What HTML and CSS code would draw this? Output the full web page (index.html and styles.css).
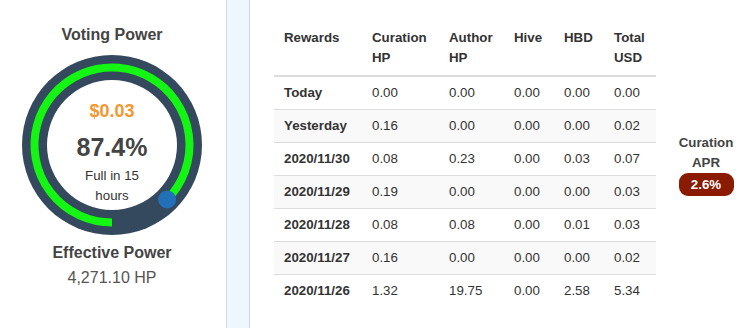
FILE: index.html
```html
<!DOCTYPE html>
<html>
<head>
<meta charset="utf-8">
<link rel="stylesheet" href="styles.css">
</head>
<body>
<div class="page">
  <section class="vp">
    <h2 class="vp-title">Voting Power</h2>
    <div class="gauge">
      <svg class="gauge-svg" width="180" height="180" viewBox="0 0 180 180">
        <circle cx="90" cy="90" r="90" fill="#34495e"/>
        <path d="M90 167.5 A77.5 77.5 0 1 1 145.14 144.46" fill="none" stroke="#14f514" stroke-width="8"/>
        <circle cx="90" cy="90" r="65" fill="#fff"/>
        <circle cx="145.14" cy="144.46" r="9" fill="#2170b8"/>
      </svg>
      <div class="gauge-text">
        <div class="gauge-usd">$0.03</div>
        <div class="gauge-pct">87.4%</div>
        <div class="gauge-full">Full in 15 hours</div>
      </div>
    </div>
    <h3 class="ep-title">Effective Power</h3>
    <div class="ep-value">4,271.10 HP</div>
  </section>
  <div class="band"></div>
  <section class="rewards">
    <table class="rtable">
      <colgroup>
        <col class="c1"><col class="c2"><col class="c3"><col class="c4"><col class="c5"><col class="c6">
      </colgroup>
      <thead>
        <tr><th>Rewards</th><th>Curation HP</th><th>Author HP</th><th>Hive</th><th>HBD</th><th>Total USD</th></tr>
      </thead>
      <tbody>
        <tr><th>Today</th><td>0.00</td><td>0.00</td><td>0.00</td><td>0.00</td><td>0.00</td></tr>
        <tr class="alt"><th>Yesterday</th><td>0.16</td><td>0.00</td><td>0.00</td><td>0.00</td><td>0.02</td></tr>
        <tr><th>2020/11/30</th><td>0.08</td><td>0.23</td><td>0.00</td><td>0.03</td><td>0.07</td></tr>
        <tr class="alt"><th>2020/11/29</th><td>0.19</td><td>0.00</td><td>0.00</td><td>0.00</td><td>0.03</td></tr>
        <tr><th>2020/11/28</th><td>0.08</td><td>0.08</td><td>0.00</td><td>0.01</td><td>0.03</td></tr>
        <tr class="alt"><th>2020/11/27</th><td>0.16</td><td>0.00</td><td>0.00</td><td>0.00</td><td>0.02</td></tr>
        <tr><th>2020/11/26</th><td>1.32</td><td>19.75</td><td>0.00</td><td>2.58</td><td>5.34</td></tr>
      </tbody>
    </table>
    <div class="apr">
      <div class="apr-label">Curation<br>APR</div>
      <span class="apr-badge">2.6%</span>
    </div>
  </section>
</div>
</body>
</html>
```

FILE: styles.css
```css
html, body {
  margin: 0;
  padding: 0;
  background: #fff;
}
body {
  font-family: "Liberation Sans", Arial, sans-serif;
  color: #333;
}
.page {
  display: flex;
  height: 328px;
  width: 756px;
  overflow: hidden;
}
.vp {
  width: 224px;
  padding: 25px 2px 0 0;
  display: flex;
  flex-direction: column;
  align-items: center;
  flex: none;
}
.vp-title, .ep-title {
  margin: 0;
  font-size: 16px;
  line-height: 20px;
  font-weight: bold;
  color: #444;
}
.gauge {
  margin-top: 10px;
  width: 180px;
  height: 180px;
  display: grid;
}
.gauge-svg, .gauge-text {
  grid-area: 1 / 1;
}
.gauge-svg {
  display: block;
}
.gauge-text {
  display: flex;
  flex-direction: column;
  align-items: center;
  padding-top: 45px;
  text-align: center;
}
.gauge-usd {
  font-size: 18px;
  line-height: 22px;
  font-weight: bold;
  color: #f5962f;
}
.gauge-pct {
  margin-top: 10px;
  font-size: 25px;
  line-height: 30px;
  font-weight: bold;
  color: #444;
}
.gauge-full {
  margin-top: 4px;
  width: 80px;
  font-size: 13.3px;
  line-height: 19.5px;
  color: #333;
}
.ep-title {
  margin-top: 8px;
}
.ep-value {
  margin-top: 5px;
  font-size: 16px;
  line-height: 20px;
  color: #555;
}
.band {
  flex: none;
  width: 22px;
  border-left: 1px solid #d3dbe3;
  border-right: 1px solid #cfd7df;
  background: #eef6fe;
}
.rewards {
  flex: 1;
  display: flex;
  align-items: center;
}
.rtable {
  margin: 21px 0 21px 24px;
  width: 382px;
  table-layout: fixed;
  border-collapse: collapse;
  font-size: 13.3px;
  line-height: 20px;
}
.c1 { width: 88px; }
.c2 { width: 77px; }
.c3 { width: 65px; }
.c4 { width: 50px; }
.c5 { width: 50px; }
.c6 { width: 52px; }
.rtable th, .rtable td {
  padding: 6px 10px;
  text-align: left;
  vertical-align: top;
}
.rtable th {
  font-weight: bold;
  color: #333;
}
.rtable thead th {
  padding: 7px 10px;
  border-bottom: 2px solid #ddd;
}
.rtable tbody tr + tr th,
.rtable tbody tr + tr td {
  border-top: 1px solid #ddd;
}
.rtable tbody tr.alt {
  background: #f9f9f9;
}
.apr {
  flex: 1;
  display: flex;
  flex-direction: column;
  align-items: center;
}
.apr-label {
  font-size: 13.3px;
  line-height: 20px;
  font-weight: bold;
  color: #444;
  text-align: center;
}
.apr-badge {
  display: block;
  width: 55px;
  height: 23px;
  line-height: 23px;
  border-radius: 9px;
  background: #8a1a00;
  color: #fff;
  font-size: 13.3px;
  font-weight: bold;
  text-align: center;
}
```
